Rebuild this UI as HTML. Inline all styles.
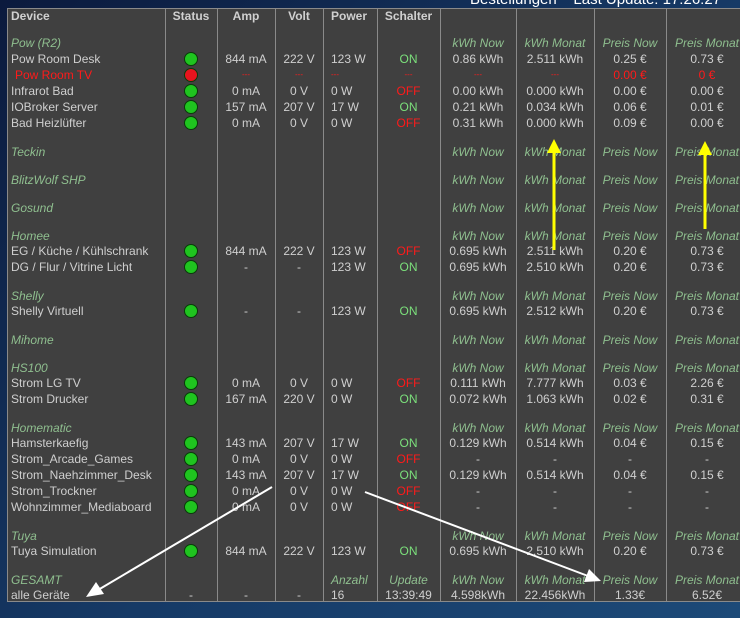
<!DOCTYPE html>
<html><head><meta charset="utf-8">
<style>
*{margin:0;padding:0;box-sizing:border-box}
body{width:740px;height:618px;overflow:hidden;position:relative;font-family:"Liberation Sans",sans-serif;font-size:12px;
background:linear-gradient(135deg,#0b1a3d 0%,#163a66 55%,#1d4a78 100%);}
.title{position:absolute;left:470px;top:-9px;color:#fff;font-size:15px;white-space:nowrap}
.tbl{position:absolute;left:7px;top:8px;width:740px;height:594px;background:#404040;border:1px solid #8a8a8a}
.vl{position:absolute;top:8px;height:594px;width:1px;background:#8a8a8a}
.r{position:absolute;left:0;height:16px;line-height:16px;color:#cfcfcf;white-space:nowrap}
.r span{position:absolute;top:0;text-align:center}
.c1{left:11px;text-align:left!important}
.c2{left:165px;width:52px}.c3{left:217px;width:58px}.c4{left:275px;width:48px}
.c5{left:331px;text-align:left!important}.c6{left:377px;width:63px}.c7{left:440px;width:76px}
.c8{left:516px;width:78px}.c9{left:594px;width:72px}.c10{left:666px;width:82px}
.h{font-weight:bold;color:#d0d0d0}
.g{font-style:italic;color:#8fbf8f}
.red{color:#ff1a1a}.on{color:#7be07b}
.d{display:inline-block;width:14px;height:14px;border-radius:50%;background:#1fc41f;border:1px solid #0a3a0a;vertical-align:middle;margin-top:-2px}
.d.x{background:#e8141e}
</style></head><body>
<div class="title">Bestellungen &nbsp;&nbsp; Last Update: 17:26:27</div>
<div class="tbl"></div>
<div class="vl" style="left:165px"></div><div class="vl" style="left:217px"></div><div class="vl" style="left:275px"></div>
<div class="vl" style="left:323px"></div><div class="vl" style="left:377px"></div><div class="vl" style="left:440px"></div>
<div class="vl" style="left:516px"></div><div class="vl" style="left:594px"></div><div class="vl" style="left:666px"></div>

<div class="r h" style="top:8px"><span class="c1">Device</span><span class="c2">Status</span><span class="c3">Amp</span><span class="c4">Volt</span><span class="c5" style="left:331px">Power</span><span class="c6">Schalter</span></div>

<div class="r g" style="top:35px"><span class="c1">Pow (R2)</span><span class="c7">kWh Now</span><span class="c8">kWh Monat</span><span class="c9">Preis Now</span><span class="c10">Preis Monat</span></div>
<div class="r" style="top:51px"><span class="c1">Pow Room Desk</span><span class="c2"><i class="d"></i></span><span class="c3">844 mA</span><span class="c4">222 V</span><span class="c5">123 W</span><span class="c6 on">ON</span><span class="c7">0.86 kWh</span><span class="c8">2.511 kWh</span><span class="c9">0.25 €</span><span class="c10">0.73 €</span></div>
<div class="r" style="top:67px"><span class="c1 red" style="left:15px">Pow Room TV</span><span class="c2"><i class="d x"></i></span><span class="c3 red" style="font-size:8px">---</span><span class="c4 red" style="font-size:8px">---</span><span class="c5 red" style="font-size:8px">---</span><span class="c6 red" style="font-size:8px">---</span><span class="c7 red" style="font-size:8px">---</span><span class="c8 red" style="font-size:8px">---</span><span class="c9 red">0.00 €</span><span class="c10 red">0 €</span></div>
<div class="r" style="top:83px"><span class="c1">Infrarot Bad</span><span class="c2"><i class="d"></i></span><span class="c3">0 mA</span><span class="c4">0 V</span><span class="c5">0 W</span><span class="c6 red">OFF</span><span class="c7">0.00 kWh</span><span class="c8">0.000 kWh</span><span class="c9">0.00 €</span><span class="c10">0.00 €</span></div>
<div class="r" style="top:99px"><span class="c1">IOBroker Server</span><span class="c2"><i class="d"></i></span><span class="c3">157 mA</span><span class="c4">207 V</span><span class="c5">17 W</span><span class="c6 on">ON</span><span class="c7">0.21 kWh</span><span class="c8">0.034 kWh</span><span class="c9">0.06 €</span><span class="c10">0.01 €</span></div>
<div class="r" style="top:115px"><span class="c1">Bad Heizlüfter</span><span class="c2"><i class="d"></i></span><span class="c3">0 mA</span><span class="c4">0 V</span><span class="c5">0 W</span><span class="c6 red">OFF</span><span class="c7">0.31 kWh</span><span class="c8">0.000 kWh</span><span class="c9">0.09 €</span><span class="c10">0.00 €</span></div>

<div class="r g" style="top:144px"><span class="c1">Teckin</span><span class="c7">kWh Now</span><span class="c8">kWh Monat</span><span class="c9">Preis Now</span><span class="c10">Preis Monat</span></div>
<div class="r g" style="top:172px"><span class="c1">BlitzWolf SHP</span><span class="c7">kWh Now</span><span class="c8">kWh Monat</span><span class="c9">Preis Now</span><span class="c10">Preis Monat</span></div>
<div class="r g" style="top:200px"><span class="c1">Gosund</span><span class="c7">kWh Now</span><span class="c8">kWh Monat</span><span class="c9">Preis Now</span><span class="c10">Preis Monat</span></div>
<div class="r g" style="top:228px"><span class="c1">Homee</span><span class="c7">kWh Now</span><span class="c8">kWh Monat</span><span class="c9">Preis Now</span><span class="c10">Preis Monat</span></div>
<div class="r" style="top:243px"><span class="c1">EG / Küche / Kühlschrank</span><span class="c2"><i class="d"></i></span><span class="c3">844 mA</span><span class="c4">222 V</span><span class="c5">123 W</span><span class="c6 red">OFF</span><span class="c7">0.695 kWh</span><span class="c8">2.511 kWh</span><span class="c9">0.20 €</span><span class="c10">0.73 €</span></div>
<div class="r" style="top:259px"><span class="c1">DG / Flur / Vitrine Licht</span><span class="c2"><i class="d"></i></span><span class="c3">-</span><span class="c4">-</span><span class="c5">123 W</span><span class="c6 on">ON</span><span class="c7">0.695 kWh</span><span class="c8">2.510 kWh</span><span class="c9">0.20 €</span><span class="c10">0.73 €</span></div>

<div class="r g" style="top:288px"><span class="c1">Shelly</span><span class="c7">kWh Now</span><span class="c8">kWh Monat</span><span class="c9">Preis Now</span><span class="c10">Preis Monat</span></div>
<div class="r" style="top:303px"><span class="c1">Shelly Virtuell</span><span class="c2"><i class="d"></i></span><span class="c3">-</span><span class="c4">-</span><span class="c5">123 W</span><span class="c6 on">ON</span><span class="c7">0.695 kWh</span><span class="c8">2.512 kWh</span><span class="c9">0.20 €</span><span class="c10">0.73 €</span></div>

<div class="r g" style="top:332px"><span class="c1">Mihome</span><span class="c7">kWh Now</span><span class="c8">kWh Monat</span><span class="c9">Preis Now</span><span class="c10">Preis Monat</span></div>
<div class="r g" style="top:360px"><span class="c1">HS100</span><span class="c7">kWh Now</span><span class="c8">kWh Monat</span><span class="c9">Preis Now</span><span class="c10">Preis Monat</span></div>
<div class="r" style="top:375px"><span class="c1">Strom LG TV</span><span class="c2"><i class="d"></i></span><span class="c3">0 mA</span><span class="c4">0 V</span><span class="c5">0 W</span><span class="c6 red">OFF</span><span class="c7">0.111 kWh</span><span class="c8">7.777 kWh</span><span class="c9">0.03 €</span><span class="c10">2.26 €</span></div>
<div class="r" style="top:391px"><span class="c1">Strom Drucker</span><span class="c2"><i class="d"></i></span><span class="c3">167 mA</span><span class="c4">220 V</span><span class="c5">0 W</span><span class="c6 on">ON</span><span class="c7">0.072 kWh</span><span class="c8">1.063 kWh</span><span class="c9">0.02 €</span><span class="c10">0.31 €</span></div>

<div class="r g" style="top:420px"><span class="c1">Homematic</span><span class="c7">kWh Now</span><span class="c8">kWh Monat</span><span class="c9">Preis Now</span><span class="c10">Preis Monat</span></div>
<div class="r" style="top:435px"><span class="c1">Hamsterkaefig</span><span class="c2"><i class="d"></i></span><span class="c3">143 mA</span><span class="c4">207 V</span><span class="c5">17 W</span><span class="c6 on">ON</span><span class="c7">0.129 kWh</span><span class="c8">0.514 kWh</span><span class="c9">0.04 €</span><span class="c10">0.15 €</span></div>
<div class="r" style="top:451px"><span class="c1">Strom_Arcade_Games</span><span class="c2"><i class="d"></i></span><span class="c3">0 mA</span><span class="c4">0 V</span><span class="c5">0 W</span><span class="c6 red">OFF</span><span class="c7">-</span><span class="c8">-</span><span class="c9">-</span><span class="c10">-</span></div>
<div class="r" style="top:467px"><span class="c1">Strom_Naehzimmer_Desk</span><span class="c2"><i class="d"></i></span><span class="c3">143 mA</span><span class="c4">207 V</span><span class="c5">17 W</span><span class="c6 on">ON</span><span class="c7">0.129 kWh</span><span class="c8">0.514 kWh</span><span class="c9">0.04 €</span><span class="c10">0.15 €</span></div>
<div class="r" style="top:483px"><span class="c1">Strom_Trockner</span><span class="c2"><i class="d"></i></span><span class="c3">0 mA</span><span class="c4">0 V</span><span class="c5">0 W</span><span class="c6 red">OFF</span><span class="c7">-</span><span class="c8">-</span><span class="c9">-</span><span class="c10">-</span></div>
<div class="r" style="top:499px"><span class="c1">Wohnzimmer_Mediaboard</span><span class="c2"><i class="d"></i></span><span class="c3">0 mA</span><span class="c4">0 V</span><span class="c5">0 W</span><span class="c6 red">OFF</span><span class="c7">-</span><span class="c8">-</span><span class="c9">-</span><span class="c10">-</span></div>

<div class="r g" style="top:528px"><span class="c1">Tuya</span><span class="c7">kWh Now</span><span class="c8">kWh Monat</span><span class="c9">Preis Now</span><span class="c10">Preis Monat</span></div>
<div class="r" style="top:543px"><span class="c1">Tuya Simulation</span><span class="c2"><i class="d"></i></span><span class="c3">844 mA</span><span class="c4">222 V</span><span class="c5">123 W</span><span class="c6 on">ON</span><span class="c7">0.695 kWh</span><span class="c8">2.510 kWh</span><span class="c9">0.20 €</span><span class="c10">0.73 €</span></div>

<div class="r g" style="top:572px"><span class="c1">GESAMT</span><span class="c5">Anzahl</span><span class="c6">Update</span><span class="c7">kWh Now</span><span class="c8">kWh Monat</span><span class="c9">Preis Now</span><span class="c10">Preis Monat</span></div>
<div class="r" style="top:587px"><span class="c1">alle Geräte</span><span class="c2">-</span><span class="c3">-</span><span class="c4">-</span><span class="c5">16</span><span class="c6">13:39:49</span><span class="c7">4.598kWh</span><span class="c8">22.456kWh</span><span class="c9">1.33€</span><span class="c10">6.52€</span></div>

<svg style="position:absolute;left:0;top:0" width="740" height="618">
<line x1="554" y1="250" x2="554" y2="150" stroke="#ffff00" stroke-width="3"/>
<polygon points="554,139 547,153 561,153" fill="#ffff00"/>
<line x1="705" y1="229" x2="705" y2="152" stroke="#ffff00" stroke-width="3"/>
<polygon points="705,141 698,155 712,155" fill="#ffff00"/>
<line x1="272" y1="487" x2="98" y2="590" stroke="#fff" stroke-width="2"/>
<polygon points="86,597 96,582 104,594" fill="#fff"/>
<line x1="365" y1="492" x2="588" y2="576" stroke="#fff" stroke-width="2"/>
<polygon points="601,581 584,582 589,569" fill="#fff"/>
</svg>
</body></html>
